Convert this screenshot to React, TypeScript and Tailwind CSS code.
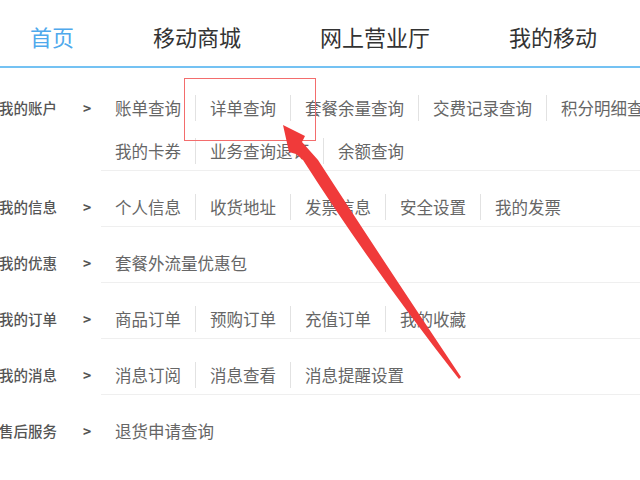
import React from "react";

const FONT = '"Noto Sans CJK SC", "Noto Sans", "Liberation Sans", sans-serif';

type Row = { label: string; lines: string[][] };

const rows: Row[] = [
  {
    label: "我的账户",
    lines: [
      ["账单查询", "详单查询", "套餐余量查询", "交费记录查询", "积分明细查询"],
      ["我的卡券", "业务查询退订", "余额查询"],
    ],
  },
  { label: "我的信息", lines: [["个人信息", "收货地址", "发票信息", "安全设置", "我的发票"]] },
  { label: "我的优惠", lines: [["套餐外流量优惠包"]] },
  { label: "我的订单", lines: [["商品订单", "预购订单", "充值订单", "我的收藏"]] },
  { label: "我的消息", lines: [["消息订阅", "消息查看", "消息提醒设置"]] },
  { label: "售后服务", lines: [["退货申请查询"]] },
];

function LinkLine({ items }: { items: string[] }) {
  return (
    <div className="flex whitespace-nowrap">
      {items.map((t, i) => (
        <span
          key={t}
          className={
            "px-[14px] h-[26px] leading-[26px] text-[16.5px] text-[#666] shrink-0 " +
            (i > 0 ? "border-l border-[#e2e2e2]" : "")
          }
        >
          {t}
        </span>
      ))}
    </div>
  );
}

export default function App() {
  return (
    <div
      className="relative w-[640px] h-[480px] overflow-hidden bg-white"
      style={{ fontFamily: FONT }}
    >
      <div className="h-[68px] pt-[6px] flex items-center pl-[30px] gap-[79px] border-b-2 border-[#74c2f3] text-[22px] whitespace-nowrap">
        <span className="text-[#4fa9ec]">首页</span>
        <span className="text-[#333]">移动商城</span>
        <span className="text-[#333]">网上营业厅</span>
        <span className="text-[#333]">我的移动</span>
      </div>
      <div className="pt-[4px]">
        {rows.map((r, idx) => (
          <div key={r.label} className="flex items-start">
            <div className="w-[57px] shrink-0 flex justify-end whitespace-nowrap pt-[23px] leading-[26px] text-[14.5px] font-medium text-[#555]">
              {r.label}
            </div>
            <div className="w-[44px] shrink-0 pl-[26px] pt-[23px] leading-[26px] text-[14px] font-bold text-[#555]">
              &gt;
            </div>
            <div
              className={
                "flex-1 min-w-0 pt-[23px] pb-[6px] flex flex-col gap-[17px] " +
                (idx < rows.length - 1 ? "border-b border-[#efefef]" : "")
              }
            >
              {r.lines.map((l, j) => (
                <LinkLine key={j} items={l} />
              ))}
            </div>
          </div>
        ))}
      </div>

      {/* annotation: red box */}
      <div className="absolute left-[184px] top-[78px] w-[132px] h-[63px] border-[1.5px] border-[#f36d6d] pointer-events-none" />

      {/* annotation: red arrow */}
      <svg
        className="absolute left-0 top-0 pointer-events-none"
        width="640"
        height="480"
        viewBox="0 0 640 480"
      >
        <path
          d="M283,125 L305,136 L302,142 L318,160 Q384,262 461,377 L459,379 Q372,268 303,160 L296,154 L289,152 Z"
          fill="#f03a3a"
        />
      </svg>
    </div>
  );
}
